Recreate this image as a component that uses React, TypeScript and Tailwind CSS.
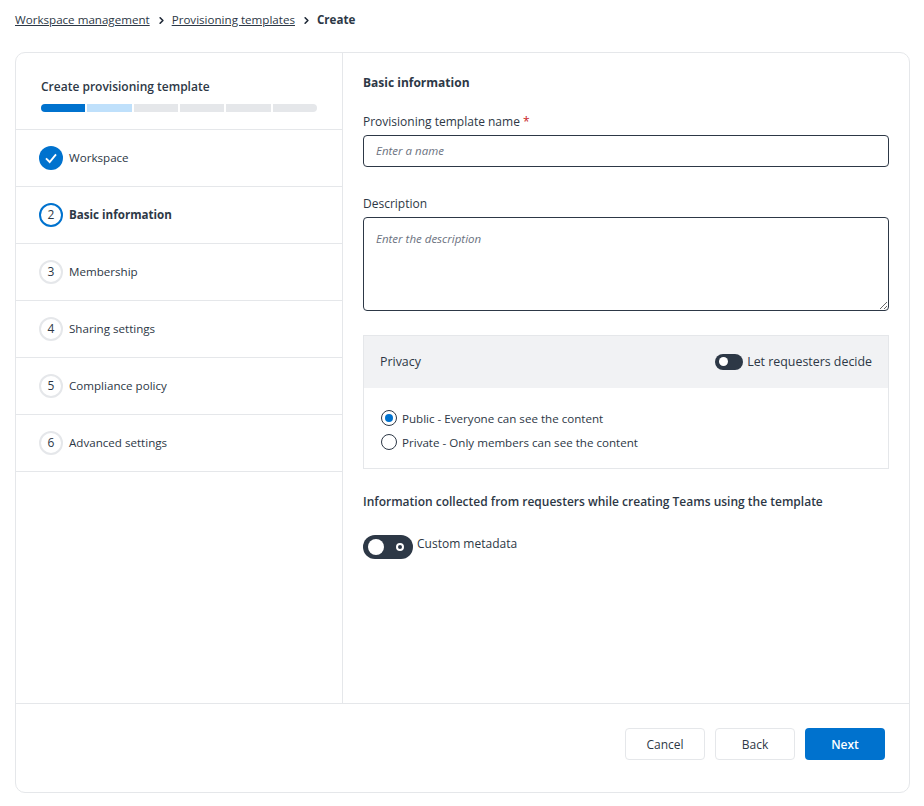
import { ChevronRight } from "lucide-react";

const steps = [
  { n: 1, label: "Workspace", state: "done" },
  { n: 2, label: "Basic information", state: "active" },
  { n: 3, label: "Membership", state: "todo" },
  { n: 4, label: "Sharing settings", state: "todo" },
  { n: 5, label: "Compliance policy", state: "todo" },
  { n: 6, label: "Advanced settings", state: "todo" },
];

const StepBadge = ({ n, state }: { n: number; state: string }) => {
  if (state === "done") {
    return (
      <span className="w-6 h-6 rounded-full bg-[#0072ce] flex items-center justify-center">
        <svg viewBox="0 0 24 24" className="w-4 h-4" fill="none" stroke="#fff" strokeWidth="2.8">
          <path d="M4.5 12.5 L10 18 L19.5 6.5" />
        </svg>
      </span>
    );
  }
  return (
    <span
      className={
        state === "active"
          ? "w-6 h-6 rounded-full border-[2.5px] border-[#0072ce] flex items-center justify-center text-xs text-[#2d3846]"
          : "w-6 h-6 rounded-full border-[2.5px] border-[#e5e7ea] flex items-center justify-center text-xs text-[#2d3846]"
      }
    >
      {n}
    </span>
  );
};

const App = () => {
  return (
    <div className="w-[924px] h-[806px] bg-white px-[15px] pt-[12px] text-[11.6px] text-[#2d3846] font-['Open_Sans','Noto_Sans',sans-serif]">
      <div className="h-[16px] flex items-center leading-4">
        <a className="underline">Workspace management</a>
        <ChevronRight className="w-[11px] h-[11px] ml-[6px] mr-[5px] text-[#1f2937]" strokeWidth={3.5} />
        <a className="underline">Provisioning templates</a>
        <ChevronRight className="w-[11px] h-[11px] ml-[6px] mr-[5px] text-[#1f2937]" strokeWidth={3.5} />
        <span className="font-bold">Create</span>
      </div>

      <div className="mt-[24px] w-[895px] h-[741px] border border-[#e5e7ea] rounded-[10px] flex flex-col">
        <div className="flex h-[651px] border-b border-[#e5e7ea]">
          <div className="w-[327px] border-r border-[#e5e7ea] flex flex-col">
            <div className="h-[77px] px-[25px] pt-[26px] border-b border-[#e5e7ea]">
              <div className="text-[12px] font-semibold leading-4">Create provisioning template</div>
              <div className="mt-[9px] flex gap-[2px] h-2 w-[276px] rounded-full overflow-hidden">
                <div className="flex-1 bg-[#0072ce]" />
                <div className="flex-1 bg-[#bfe0fb]" />
                <div className="flex-1 bg-[#e5e7ea]" />
                <div className="flex-1 bg-[#e5e7ea]" />
                <div className="flex-1 bg-[#e5e7ea]" />
                <div className="flex-1 bg-[#e5e7ea]" />
              </div>
            </div>
            {steps.map((s) => (
              <div key={s.n} className="h-[57px] pl-[23px] flex items-center gap-[6px] border-b border-[#e5e7ea]">
                <StepBadge n={s.n} state={s.state} />
                <span className={s.state === "active" ? "font-bold" : ""}>{s.label}</span>
              </div>
            ))}
          </div>

          <div className="flex-1 pl-[20px] pr-[20px] pt-[22px]">
            <div className="text-[12px] font-bold leading-4">Basic information</div>
            <div className="mt-[23px] text-[12px] font-medium leading-4">
              Provisioning template name <span className="text-[#c81e1e]">*</span>
            </div>
            <input
              placeholder="Enter a name"
              className="mt-[5px] block w-full h-[32px] border border-[#2d3846] rounded-[4px] px-3 pb-[2px] text-[11.5px] italic placeholder:text-[#6b7280] outline-none"
            />
            <div className="mt-[29px] text-[12px] font-medium leading-4">Description</div>
            <textarea
              placeholder="Enter the description"
              className="mt-[5px] block w-full h-[94px] border border-[#2d3846] rounded-[4px] px-3 py-[13px] text-[11.5px] leading-4 italic placeholder:text-[#6b7280] outline-none"
            />

            <div className="mt-[24px] border border-[#e5e7ea]">
              <div className="h-[52px] bg-[#f1f2f4] flex items-center justify-between pl-4 pr-4">
                <span className="text-[12.4px] font-medium">Privacy</span>
                <div className="flex items-center gap-1">
                  <span className="w-7 h-4 rounded-full bg-[#2d3846] flex items-center pl-[4px]">
                    <span className="w-[9px] h-[9px] rounded-full bg-white" />
                  </span>
                  <span className="text-[12.4px] font-medium">Let requesters decide</span>
                </div>
              </div>
              <div className="h-[80px] pl-[17px] pt-[22px] flex flex-col gap-[8px]">
                <div className="flex items-center gap-[5px] h-4">
                  <span className="w-4 h-4 rounded-full border border-[#2d3846] flex items-center justify-center">
                    <span className="w-2 h-2 rounded-full bg-[#0072ce]" />
                  </span>
                  <span className="pt-[1px]">Public - Everyone can see the content</span>
                </div>
                <div className="flex items-center gap-[5px] h-4">
                  <span className="w-4 h-4 rounded-full border border-[#2d3846]" />
                  <span className="pt-[1px]">Private - Only members can see the content</span>
                </div>
              </div>
            </div>

            <div className="mt-[25px] text-[12px] font-semibold leading-4">
              Information collected from requesters while creating Teams using the template
            </div>
            <div className="mt-[25px] flex items-start gap-1">
              <span className="w-[50px] h-6 rounded-full bg-[#2d3846] flex items-center justify-between pl-[5px] pr-[9px]">
                <span className="w-4 h-4 rounded-full bg-white" />
                <span className="w-2 h-2 rounded-full border-2 border-white" />
              </span>
              <span className="text-[12px] leading-[18px]">Custom metadata</span>
            </div>
          </div>
        </div>

        <div className="flex-1 flex justify-end items-start gap-[10px] pt-[24px] pr-[24px]">
          <button className="w-20 h-8 pt-[1px] border border-[#e5e7ea] rounded-[4px] text-[12px] font-medium">Cancel</button>
          <button className="w-20 h-8 pt-[1px] border border-[#e5e7ea] rounded-[4px] text-[12px] font-medium">Back</button>
          <button className="w-20 h-8 pt-[1px] bg-[#0072ce] rounded-[4px] text-[12px] font-semibold text-white">Next</button>
        </div>
      </div>
    </div>
  );
};

export default App;
